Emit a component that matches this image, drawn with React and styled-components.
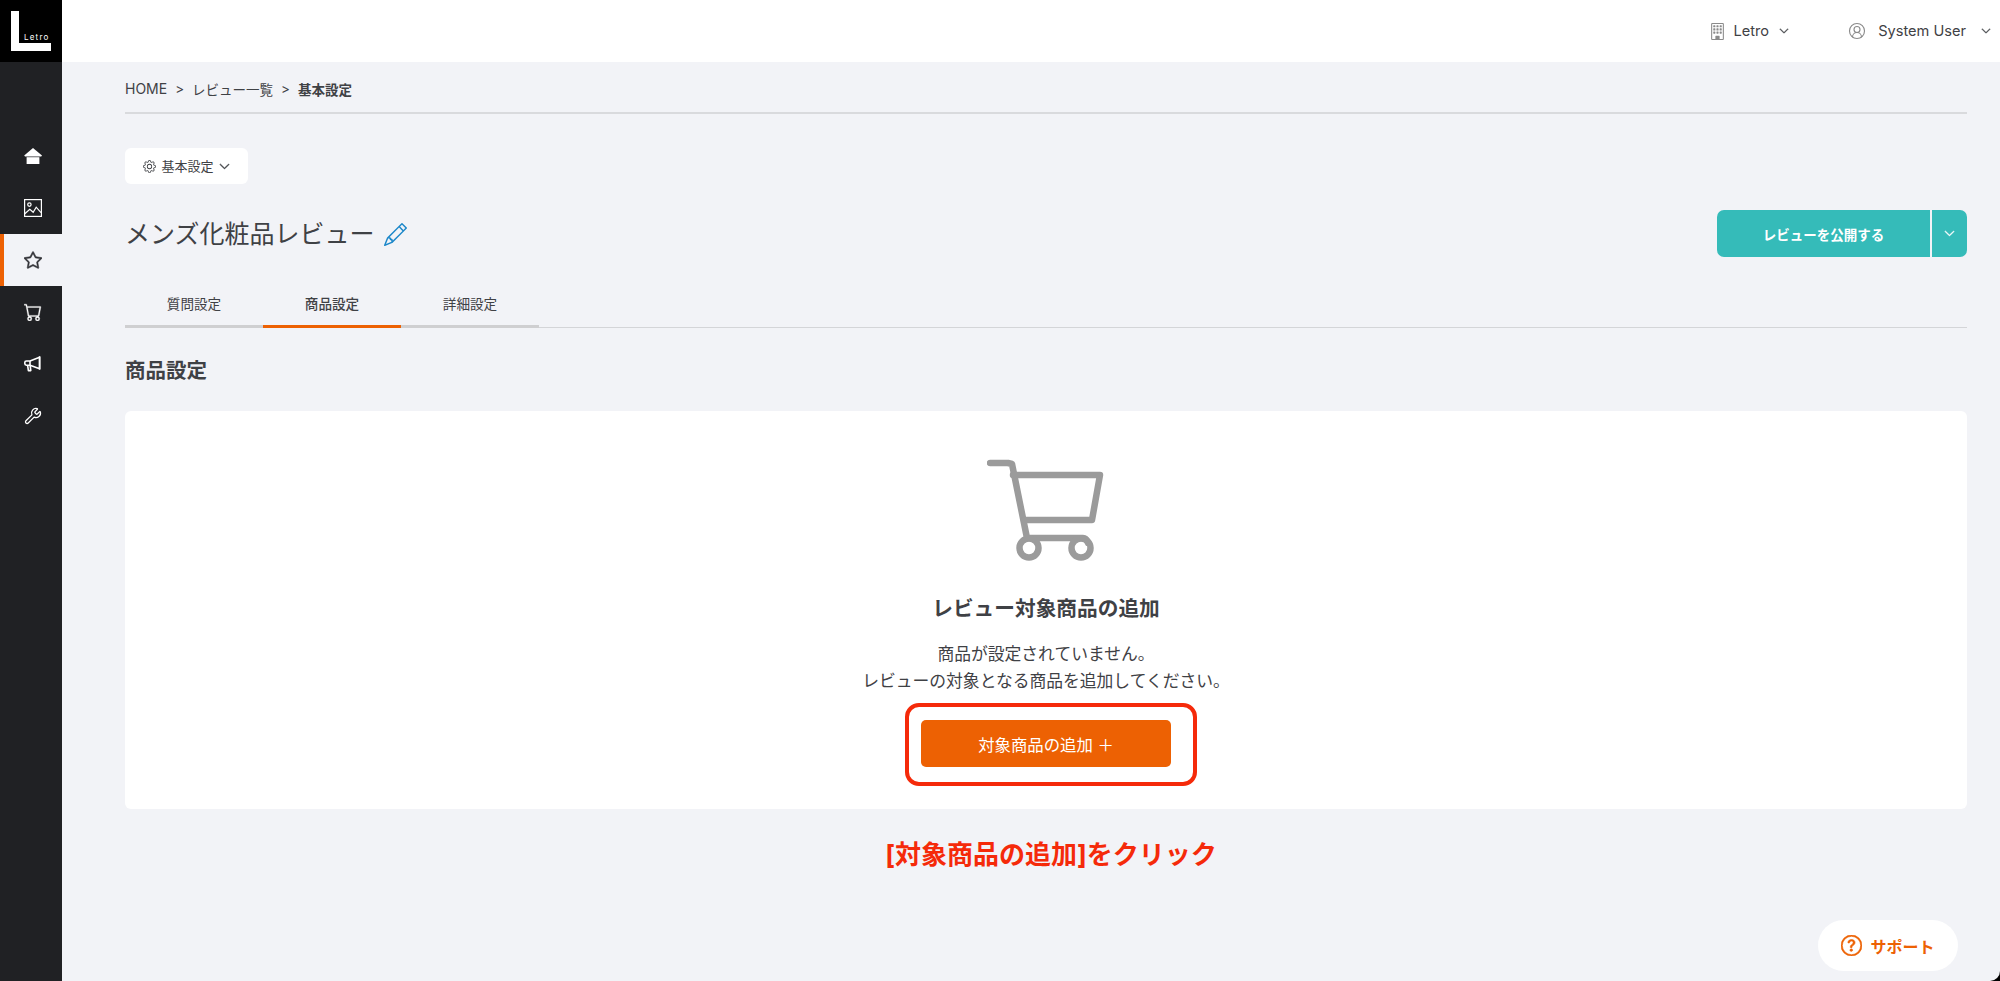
import styled, { createGlobalStyle } from 'styled-components';
import {
  BsStar,
  BsCart,
  BsBuilding,
  BsGear,
  BsChevronDown,
  BsPencil,
  BsQuestionCircle,
} from 'react-icons/bs';
import { CircleUserRound, Wrench } from 'lucide-react';

const TEXT = '#3f4145';
const ORANGE = '#ed6103';
const RED = '#f52a0a';
const BG = '#f2f3f7';

const GlobalStyle = createGlobalStyle`
  html, body { margin: 0; padding: 0; background: #000; }
  body {
    font-family: "Inter", "Noto Sans CJK JP", sans-serif;
    color: ${TEXT};
  }
  * { box-sizing: border-box; }
`;

const Layout = styled.div`
  display: flex;
  width: 2000px;
  height: 981px;
  overflow: hidden;
  position: relative;
`;

const Sidebar = styled.nav`
  width: 62px;
  flex-shrink: 0;
  background: #202124;
`;

const LogoBox = styled.div`
  height: 62px;
  background: #000;
  display: flex;
  align-items: center;
  justify-content: center;
  margin-bottom: 68px;
`;

const NavItem = styled.div`
  height: 52px;
  display: flex;
  align-items: center;
  justify-content: center;
  padding-left: 3px;
  color: ${p => (p.$active ? '#303136' : '#fff')};
  background: ${p => (p.$active ? BG : 'transparent')};
  box-shadow: ${p => (p.$active ? `inset 4px 0 0 ${ORANGE}` : 'none')};
`;

const Main = styled.div`
  flex: 1;
  display: flex;
  flex-direction: column;
  min-width: 0;
  background: ${BG};
  border-bottom-right-radius: 10px;
`;

const Header = styled.header`
  height: 62px;
  background: #fff;
  display: flex;
  align-items: center;
  justify-content: flex-end;
  padding-right: 9px;
  gap: 59px;
  font-size: 14.6px;
`;

const HeaderMenu = styled.div`
  display: flex;
  align-items: center;
`;

const HeaderLabel = styled.span`
  margin: 0 ${p => p.$after}px 0 ${p => p.$before}px;
`;

const Content = styled.main`
  padding: 0 33px 0 63px;
`;

const Breadcrumb = styled.div`
  height: 52px;
  display: flex;
  align-items: center;
  gap: 8px;
  font-size: 13.5px;
  border-bottom: 2px solid #d9dadd;
  padding-top: 3px;
`;

const Crumb = styled.span`
  font-weight: ${p => (p.$current ? 700 : 400)};
  font-size: ${p => (p.$latin ? '14px' : 'inherit')};
`;

const SettingsButton = styled.button`
  margin-top: 34px;
  width: 123px;
  height: 36px;
  display: flex;
  align-items: center;
  justify-content: center;
  gap: 5px;
  border: 0;
  border-radius: 6px;
  background: #fff;
  color: ${TEXT};
  font: inherit;
  font-size: 13px;
  line-height: 1;
`;

const TitleRow = styled.div`
  margin-top: 26px;
  display: flex;
  align-items: center;
  justify-content: space-between;
`;

const TitleGroup = styled.div`
  display: flex;
  align-items: center;
  gap: 9px;
  color: #1c87c9;
  font-size: 23px;
`;

const Title = styled.h1`
  margin: 0;
  font-size: 25px;
  font-weight: 400;
  color: ${TEXT};
  line-height: 38px;
`;

const PublishGroup = styled.div`
  display: flex;
  height: 47px;
  margin-bottom: 1px;
  gap: 2px;
  color: #fff;
`;

const PublishButton = styled.button`
  width: 213px;
  border: 0;
  background: #35bbb9;
  color: #fff;
  border-radius: 7px 0 0 7px;
  font: inherit;
  font-size: 13.5px;
  font-weight: 700;
`;

const PublishArrow = styled.button`
  width: 35px;
  border: 0;
  background: #35bbb9;
  color: #fff;
  border-radius: 0 7px 7px 0;
  font-size: 11px;
  display: flex;
  align-items: center;
  justify-content: center;
`;

const Tabs = styled.div`
  margin-top: 23px;
  display: flex;
  border-bottom: 1px solid #d4d5d8;
`;

const Tab = styled.div`
  width: 138px;
  height: 47px;
  margin-bottom: -1px;
  display: flex;
  align-items: center;
  justify-content: center;
  font-size: 13.6px;
  font-weight: ${p => (p.$active ? 500 : 400)};
  border-bottom: 3px solid ${p => (p.$active ? ORANGE : '#cfcfd1')};
`;

const SectionTitle = styled.h2`
  margin: 28px 0 0;
  font-size: 20.5px;
  line-height: 29px;
  font-weight: 700;
`;

const Card = styled.section`
  margin-top: 26px;
  height: 398px;
  background: #fff;
  border-radius: 6px;
  display: flex;
  flex-direction: column;
  align-items: center;
  padding-top: 47px;
`;

const CartIcon = styled.svg`
  width: 118px;
  height: 104px;
  display: block;
  flex-shrink: 0;
`;

const CardTitle = styled.h3`
  margin: 32px 0 0;
  font-size: 20.7px;
  line-height: 30px;
  font-weight: 700;
`;

const CardText = styled.p`
  margin: 17px 0 0;
  font-size: 16.8px;
  line-height: 27px;
  text-align: center;
`;

const Highlight = styled.div`
  margin: 8px 0 0 10px;
  width: 292px;
  height: 83px;
  padding: 13px 22px 15px 12px;
  border: 4px solid ${RED};
  border-radius: 14px;
`;

const AddButton = styled.button`
  width: 100%;
  height: 47px;
  border: 0;
  border-radius: 5px;
  background: ${ORANGE};
  color: #fff;
  font: inherit;
  font-size: 16.4px;
`;

const Annotation = styled.p`
  margin: 28px 0 0 10px;
  text-align: center;
  font-size: 26px;
  line-height: 36px;
  font-weight: 700;
  color: ${RED};
`;

const SupportButton = styled.div`
  position: absolute;
  right: 42px;
  bottom: 10px;
  width: 140px;
  height: 51px;
  display: flex;
  align-items: center;
  justify-content: center;
  gap: 8px;
  border-radius: 26px;
  background: #fff;
  color: ${ORANGE};
  font-size: 16px;
  font-weight: 700;
`;

const ThickChevron = styled(BsChevronDown)`
  stroke: currentColor;
  stroke-width: 1;
`;

const ThickStar = styled(BsStar)`
  stroke: currentColor;
  stroke-width: 0.5;
`;

const ThickCart = styled(BsCart)`
  stroke: currentColor;
  stroke-width: 0.3;
`;

const ThickQuestion = styled(BsQuestionCircle)`
  stroke: currentColor;
  stroke-width: 0.5;
`;

function Logo() {
  return (
    <svg width="40" height="40" viewBox="0 0 40 40">
      <path fill="#fff" d="M0 0h8v32h32v8H0z" />
      <text x="13" y="29" fill="#fff" fontSize="8" letterSpacing="1.2" fontFamily="Inter, sans-serif">
        Letro
      </text>
    </svg>
  );
}

function HomeIcon() {
  return (
    <svg width="18" height="16" viewBox="0 0 18 16" fill="currentColor">
      <path d="M9 0l9 7.6-.8.9H1L.2 7.6z" />
      <path d="M2.6 9.2h12.8V16H2.6z" />
    </svg>
  );
}

function PictureIcon() {
  return (
    <svg width="18" height="18" viewBox="0 0 18 18" fill="none" stroke="currentColor" strokeWidth="1.2">
      <rect x=".6" y=".6" width="16.8" height="16.8" />
      <circle cx="5.4" cy="5.6" r="1.7" />
      <path d="M.8 14.8l5-4.6 3.4 3 3-5 4.8 5.4" />
    </svg>
  );
}

function MegaphoneIcon() {
  return (
    <svg width="18" height="18" viewBox="0 0 18 18" fill="none" stroke="currentColor" strokeWidth="1.6" strokeLinejoin="round">
      <path d="M15.6 1.2v13.4" />
      <path d="M15.6 2.2L6 6H2.4C1.3 6 .8 6.7.8 7.6v1c0 .9.5 1.6 1.6 1.6H6l9.6 3.6z" />
      <path d="M6 6v4.2" />
      <path d="M3.6 10.4l.8 5.2h2.4l-.6-5" />
    </svg>
  );
}

const NAV_ITEMS = [
  { id: 'home', icon: <HomeIcon /> },
  { id: 'image', icon: <PictureIcon /> },
  { id: 'star', icon: <ThickStar size={18} />, active: true },
  { id: 'cart', icon: <ThickCart size={18} /> },
  { id: 'megaphone', icon: <MegaphoneIcon /> },
  { id: 'wrench', icon: <Wrench size={18} strokeWidth={1.7} /> },
];

const TABS = ['質問設定', '商品設定', '詳細設定'];

export default function App() {
  return (
    <Layout>
      <GlobalStyle />
      <Sidebar>
        <LogoBox>
          <Logo />
        </LogoBox>
        {NAV_ITEMS.map(item => (
          <NavItem key={item.id} $active={item.active}>
            {item.icon}
          </NavItem>
        ))}
      </Sidebar>
      <Main>
        <Header>
          <HeaderMenu>
            <BsBuilding size={17} color="#8a8a8a" />
            <HeaderLabel $before={8} $after={10}>Letro</HeaderLabel>
            <ThickChevron size={10} />
          </HeaderMenu>
          <HeaderMenu>
            <CircleUserRound size={18} color="#8a8a8a" strokeWidth={1.5} />
            <HeaderLabel $before={12} $after={15}>System User</HeaderLabel>
            <ThickChevron size={10} />
          </HeaderMenu>
        </Header>
        <Content>
          <Breadcrumb>
            <Crumb $latin>HOME</Crumb>
            <Crumb>&gt;</Crumb>
            <Crumb>レビュー一覧</Crumb>
            <Crumb>&gt;</Crumb>
            <Crumb $current>基本設定</Crumb>
          </Breadcrumb>
          <SettingsButton>
            <BsGear size={13} />
            基本設定
            <ThickChevron size={11} />
          </SettingsButton>
          <TitleRow>
            <TitleGroup>
              <Title>メンズ化粧品レビュー</Title>
              <BsPencil />
            </TitleGroup>
            <PublishGroup>
              <PublishButton>レビューを公開する</PublishButton>
              <PublishArrow>
                <ThickChevron />
              </PublishArrow>
            </PublishGroup>
          </TitleRow>
          <Tabs>
            {TABS.map((tab, i) => (
              <Tab key={tab} $active={i === 1}>
                {tab}
              </Tab>
            ))}
          </Tabs>
          <SectionTitle>商品設定</SectionTitle>
          <Card>
            <CartIcon viewBox="0 0 118 104" fill="none" stroke="#9b9b9b" strokeWidth="6.5" strokeLinecap="round" strokeLinejoin="round">
              <path d="M3 5h18l4 1 15 74h56c2 0 4 2 5 5" />
              <path d="M26 17h87l-8 45H37" />
              <circle cx="42" cy="90" r="9.5" />
              <circle cx="94" cy="90" r="9.5" />
            </CartIcon>
            <CardTitle>レビュー対象商品の追加</CardTitle>
            <CardText>
              商品が設定されていません。
              <br />
              レビューの対象となる商品を追加してください。
            </CardText>
            <Highlight>
              <AddButton>対象商品の追加 ＋</AddButton>
            </Highlight>
          </Card>
          <Annotation>[対象商品の追加]をクリック</Annotation>
        </Content>
      </Main>
      <SupportButton>
        <ThickQuestion size={21} />
        サポート
      </SupportButton>
    </Layout>
  );
}
